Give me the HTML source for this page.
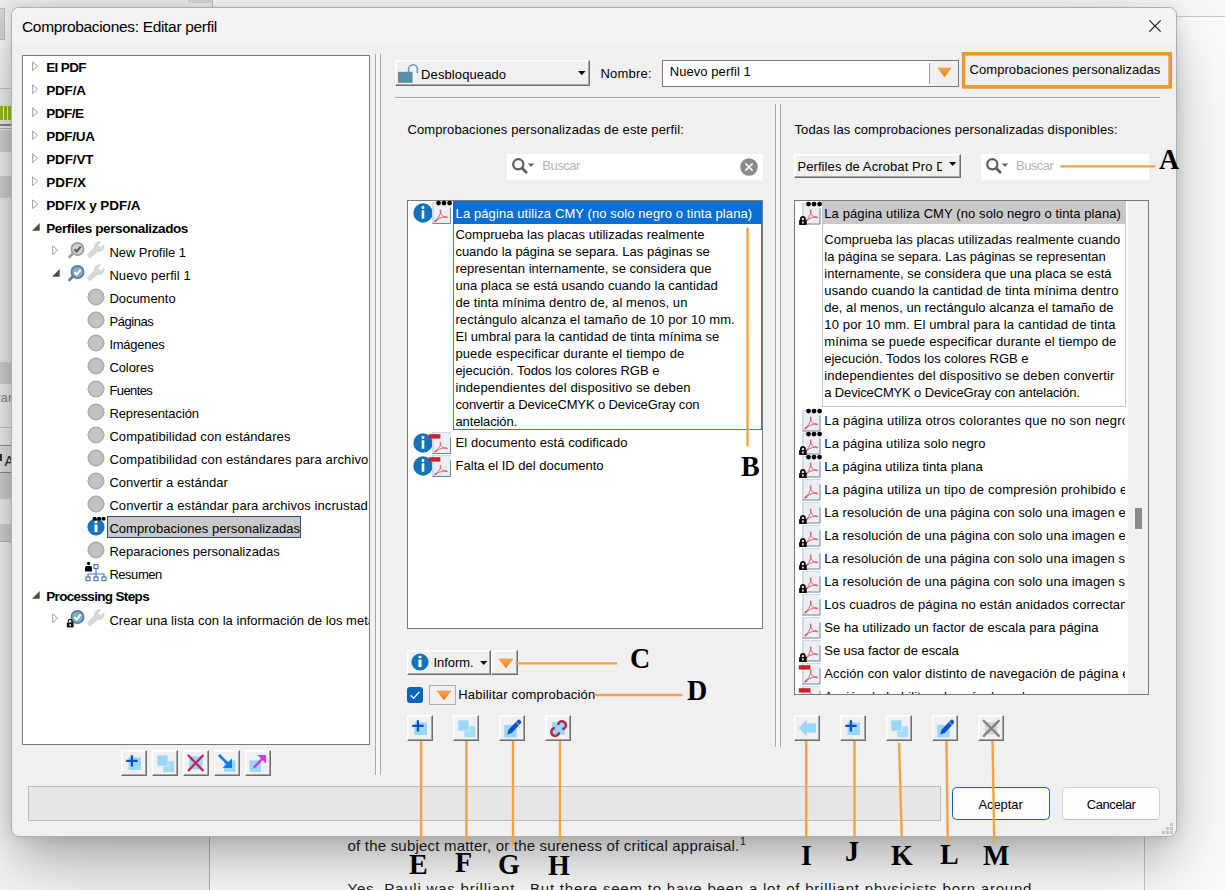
<!DOCTYPE html>
<html lang="es">
<head>
<meta charset="utf-8">
<title>Comprobaciones: Editar perfil</title>
<style>
*{box-sizing:border-box;margin:0;padding:0}
html,body{width:1225px;height:890px;overflow:hidden;background:#fff}
body{position:relative;font-family:"Liberation Sans",sans-serif;font-size:13px;letter-spacing:.12px;color:#000}
.a{position:absolute}
.t{position:absolute;white-space:nowrap;line-height:16px;height:16px}
.b{font-weight:700;letter-spacing:-.14px}
svg{position:absolute;overflow:visible}
#dlg{position:absolute;left:11px;top:7px;width:1166px;height:830px;background:#f0f0f0;border-radius:8px;border:1px solid #aeaeae;box-shadow:0 24px 40px -8px rgba(0,0,0,.21),0 40px 90px rgba(0,0,0,.15),0 0 16px rgba(0,0,0,.12)}
#ttl{position:absolute;left:0;top:0;width:1164px;height:36px;background:#f3f3f3;border-radius:7px 7px 0 0}
.box{position:absolute;background:#fff;border:1px solid #7a7a7a;overflow:hidden}
.btn3{position:absolute;background:#f0f0f0;border-top:1px solid #fff;border-left:1px solid #fff;border-right:1px solid #6e6e6e;border-bottom:1px solid #6e6e6e;box-shadow:inset -1px -1px 0 #a6a6a6,inset 1px 1px 0 #f8f8f8}
.ol{position:absolute;background:#f2a246}
.L{position:absolute;font-family:"Liberation Serif",serif;font-weight:700;font-size:30px;line-height:30px;height:30px;transform:scaleX(.935);transform-origin:0 0;letter-spacing:0;color:#000;white-space:nowrap}
.doc{position:absolute;white-space:nowrap;font-size:15px;line-height:20px;color:#1c1c1c}
.desc{position:absolute;line-height:17px;white-space:nowrap}
.g{color:#b4b4b4}
</style>
</head>
<body>
<div id="bg" class="a" style="left:0;top:0;width:1225px;height:890px;overflow:hidden;background:#fff">
<div class="a" style="left:0px;top:0px;width:213px;height:16px;background:#ececec;"></div>
<div class="a" style="left:213px;top:0px;width:1012px;height:16px;background:#f7f7f7;"></div>
<div class="a" style="left:188px;top:0px;width:24px;height:3px;background:#d6d6d6;"></div>
<div class="a" style="left:212px;top:0px;width:1px;height:10px;background:#c4c4c4;"></div>
<div class="a" style="left:1176px;top:16px;width:49px;height:874px;background:#fbfbfb;"></div>
<div class="a" style="left:1176px;top:16px;width:49px;height:1px;background:#c9c9c9;"></div>
<div class="a" style="left:0px;top:16px;width:30px;height:820px;background:#f4f4f4;"></div>
<div class="a" style="left:0px;top:8px;width:5px;height:32px;background:#d2d2d2;border:1px solid #bdbdbd;border-left:0"></div>
<div class="a" style="left:0px;top:88px;width:30px;height:38px;background:#f1f1f1;border-top:1px solid #c8c8c8"></div>
<div class="a" style="left:0px;top:106px;width:3px;height:14px;background:#9bc21e;"></div>
<div class="a" style="left:4px;top:106px;width:3px;height:14px;background:#9bc21e;"></div>
<div class="a" style="left:8px;top:106px;width:3px;height:14px;background:#9bc21e;"></div>
<div class="a" style="left:0px;top:124px;width:30px;height:2px;background:#8a8a8a;"></div>
<div class="a" style="left:0px;top:128px;width:30px;height:1px;background:#b0b0b0;"></div>
<div class="a" style="left:0px;top:130px;width:30px;height:22px;background:#d4d4d4;"></div>
<div class="a" style="left:0px;top:152px;width:30px;height:24px;background:#f4f4f4;"></div>
<div class="a" style="left:0px;top:176px;width:30px;height:22px;background:#d4d4d4;"></div>
<div class="a" style="left:0px;top:198px;width:30px;height:164px;background:#f0f0f0;"></div>
<div class="a" style="left:0px;top:362px;width:30px;height:22px;background:#d4d4d4;"></div>
<div class="a" style="left:0px;top:384px;width:30px;height:34px;background:#f4f4f4;"></div>
<div class="t" style="left:-6px;top:390px;color:#8a8a8a;font-size:13px">var</div>
<div class="a" style="left:0px;top:427px;width:30px;height:1px;background:#cdcdcd;"></div>
<div class="a" style="left:0px;top:445px;width:14px;height:28px;background:#e6e6e6;border:1px solid #8e8e8e;border-left:0"></div>
<div class="t" style="left:4.5px;top:453px;color:#222;font-size:14px">A</div>
<div class="a" style="left:0px;top:454px;width:2px;height:7px;background:#333;"></div>
<div class="a" style="left:0px;top:473px;width:30px;height:26px;background:#d2d2d2;"></div>
<div class="a" style="left:0px;top:499px;width:30px;height:25px;background:#f2f2f2;"></div>
<div class="a" style="left:0px;top:524px;width:30px;height:17px;background:#d6d6d6;"></div>
<div class="a" style="left:0px;top:541px;width:30px;height:1px;background:#b4b4b4;"></div>
<div class="a" style="left:0px;top:542px;width:30px;height:348px;background:#f6f6f6;"></div>
<div class="a" style="left:0px;top:836px;width:209px;height:54px;background:#f6f6f6;"></div>
<div class="a" style="left:209px;top:836px;width:1px;height:54px;background:#b4b4b4;"></div>
<div class="a" style="left:210px;top:836px;width:934px;height:54px;background:#fff;"></div>
<div class="a" style="left:1144px;top:836px;width:1px;height:54px;background:#c4c4c4;"></div>
<div class="a" style="left:1145px;top:836px;width:80px;height:54px;background:#fbfbfb;"></div>
<div class="doc" style="left:347.5px;top:835.5px;letter-spacing:0.206px;">of the subject matter, or the sureness of critical appraisal.<span style="font-size:10.5px;position:relative;top:-5.5px;letter-spacing:0;margin-left:.5px">1</span></div>
<div class="doc" style="left:347.5px;top:879.1px;letter-spacing:0.789px;">Yes, Pauli was brilliant.&nbsp; But there seem to have been a lot of brilliant physicists born around</div>
</div>
<div id="dlg"><div id="ttl"></div></div>
<div class="t" style="left:22px;top:17px;font-size:15.5px;line-height:20px;height:20px;letter-spacing:-.32px">Comprobaciones: Editar perfil</div>
<svg style="left:1149px;top:20px" width="12" height="12" viewBox="0 0 12 12"><path d="M0.3,0.3 L11.7,11.7 M11.7,0.3 L0.3,11.7" stroke="#111" stroke-width="1.1" fill="none"/></svg>
<div class="box" style="left:22px;top:55px;width:348px;height:690px"></div>
<div class="a" style="left:23px;top:56px;width:346px;height:688px;overflow:hidden">
</div>
<div class="a" style="left:23px;top:56px;width:346px;height:688px;overflow:hidden">
<div class="a" style="left:-23px;top:-56px;width:400px;height:800px">
<svg style="left:32px;top:60.99999999999999px" width="7" height="11" viewBox="0 0 7 11"><path d="M0.6,0.9 L5.7,5.2 L0.6,9.6 Z" fill="#fff" stroke="#a0a0a0" stroke-width="1"/></svg>
<div class="t b" style="left:46.2px;top:60.1px;letter-spacing:-0.634px;font-size:13.5px;">El PDF</div>
<svg style="left:32px;top:84.0px" width="7" height="11" viewBox="0 0 7 11"><path d="M0.6,0.9 L5.7,5.2 L0.6,9.6 Z" fill="#fff" stroke="#a0a0a0" stroke-width="1"/></svg>
<div class="t b" style="left:46.2px;top:83.1px;letter-spacing:-0.160px;font-size:13.5px;">PDF/A</div>
<svg style="left:32px;top:107.0px" width="7" height="11" viewBox="0 0 7 11"><path d="M0.6,0.9 L5.7,5.2 L0.6,9.6 Z" fill="#fff" stroke="#a0a0a0" stroke-width="1"/></svg>
<div class="t b" style="left:46.2px;top:106.1px;letter-spacing:-0.471px;font-size:13.5px;">PDF/E</div>
<svg style="left:32px;top:130.0px" width="7" height="11" viewBox="0 0 7 11"><path d="M0.6,0.9 L5.7,5.2 L0.6,9.6 Z" fill="#fff" stroke="#a0a0a0" stroke-width="1"/></svg>
<div class="t b" style="left:46.2px;top:129.1px;letter-spacing:-0.291px;font-size:13.5px;">PDF/UA</div>
<svg style="left:32px;top:153.0px" width="7" height="11" viewBox="0 0 7 11"><path d="M0.6,0.9 L5.7,5.2 L0.6,9.6 Z" fill="#fff" stroke="#a0a0a0" stroke-width="1"/></svg>
<div class="t b" style="left:46.2px;top:152.1px;letter-spacing:-0.133px;font-size:13.5px;">PDF/VT</div>
<svg style="left:32px;top:176.0px" width="7" height="11" viewBox="0 0 7 11"><path d="M0.6,0.9 L5.7,5.2 L0.6,9.6 Z" fill="#fff" stroke="#a0a0a0" stroke-width="1"/></svg>
<div class="t b" style="left:46.2px;top:175.1px;letter-spacing:-0.011px;font-size:13.5px;">PDF/X</div>
<svg style="left:32px;top:199.0px" width="7" height="11" viewBox="0 0 7 11"><path d="M0.6,0.9 L5.7,5.2 L0.6,9.6 Z" fill="#fff" stroke="#a0a0a0" stroke-width="1"/></svg>
<div class="t b" style="left:46.2px;top:198.1px;letter-spacing:-0.074px;font-size:13.5px;">PDF/X y PDF/A</div>
<svg style="left:32.2px;top:223.1px" width="8" height="8" viewBox="0 0 8 8"><path d="M7.7,0 L7.7,7.7 L0,7.7 Z" fill="#4a4a4a"/></svg>
<div class="t b" style="left:46.2px;top:221.1px;letter-spacing:-0.392px;font-size:13.5px;">Perfiles personalizados</div>
<svg style="left:52px;top:245.00000000000003px" width="7" height="11" viewBox="0 0 7 11"><path d="M0.6,0.9 L5.7,5.2 L0.6,9.6 Z" fill="#fff" stroke="#a0a0a0" stroke-width="1"/></svg>
<svg style="left:68.4px;top:242.00000000000003px" width="18" height="18" viewBox="0 0 18 18"><path d="M5.2,11.2 L1.4,15" stroke="#9b9b9b" stroke-width="2.6" stroke-linecap="round"/><circle cx="9.5" cy="7" r="6.1" fill="#cfcfcf" stroke="#9b9b9b" stroke-width="1.7"/><path d="M6.4,7.2 L8.7,9.4 L12.7,4.6" stroke="#5a5a5a" stroke-width="2.1" fill="none"/></svg>
<svg style="left:87px;top:241.00000000000003px" width="19" height="18" viewBox="0 0 19 18"><path d="M0,13.4 L8,5.8 L12,10 L2.4,17.4 Z" fill="#d7d7d7"/><circle cx="12.2" cy="5.6" r="5.3" fill="#d7d7d7"/><path d="M12.6,5.2 L19,-1.2" stroke="#fff" stroke-width="3.6"/></svg>
<div class="t " style="left:109.4px;top:244.6px;letter-spacing:-0.054px;">New Profile 1</div>
<svg style="left:52.2px;top:269.1px" width="8" height="8" viewBox="0 0 8 8"><path d="M7.7,0 L7.7,7.7 L0,7.7 Z" fill="#4a4a4a"/></svg>
<svg style="left:68.4px;top:265.0px" width="18" height="18" viewBox="0 0 18 18"><path d="M5.2,11.2 L1.4,15" stroke="#4f8098" stroke-width="2.6" stroke-linecap="round"/><circle cx="9.5" cy="7" r="6.1" fill="#86adc2" stroke="#4f8098" stroke-width="1.7"/><path d="M6.4,7.2 L8.7,9.4 L12.7,4.6" stroke="#fff" stroke-width="2.1" fill="none"/></svg>
<svg style="left:87px;top:264.0px" width="19" height="18" viewBox="0 0 19 18"><path d="M0,13.4 L8,5.8 L12,10 L2.4,17.4 Z" fill="#d7d7d7"/><circle cx="12.2" cy="5.6" r="5.3" fill="#d7d7d7"/><path d="M12.6,5.2 L19,-1.2" stroke="#fff" stroke-width="3.6"/></svg>
<div class="t " style="left:109.4px;top:267.6px;letter-spacing:0.085px;">Nuevo perfil 1</div>
<svg style="left:87.4px;top:287.5px" width="18" height="18" viewBox="0 0 18 18"><circle cx="9" cy="9" r="8.3" fill="#b8b8b8"/><circle cx="9" cy="9" r="6.4" fill="#c3c3c3"/><circle cx="9" cy="9" r="8" fill="none" stroke="#adadad" stroke-width="1"/></svg>
<div class="t " style="left:109.4px;top:290.6px;letter-spacing:-0.031px;">Documento</div>
<svg style="left:87.4px;top:310.5px" width="18" height="18" viewBox="0 0 18 18"><circle cx="9" cy="9" r="8.3" fill="#b8b8b8"/><circle cx="9" cy="9" r="6.4" fill="#c3c3c3"/><circle cx="9" cy="9" r="8" fill="none" stroke="#adadad" stroke-width="1"/></svg>
<div class="t " style="left:109.4px;top:313.6px;letter-spacing:-0.425px;">Páginas</div>
<svg style="left:87.4px;top:333.5px" width="18" height="18" viewBox="0 0 18 18"><circle cx="9" cy="9" r="8.3" fill="#b8b8b8"/><circle cx="9" cy="9" r="6.4" fill="#c3c3c3"/><circle cx="9" cy="9" r="8" fill="none" stroke="#adadad" stroke-width="1"/></svg>
<div class="t " style="left:109.4px;top:336.6px;letter-spacing:-0.249px;">Imágenes</div>
<svg style="left:87.4px;top:356.5px" width="18" height="18" viewBox="0 0 18 18"><circle cx="9" cy="9" r="8.3" fill="#b8b8b8"/><circle cx="9" cy="9" r="6.4" fill="#c3c3c3"/><circle cx="9" cy="9" r="8" fill="none" stroke="#adadad" stroke-width="1"/></svg>
<div class="t " style="left:109.4px;top:359.6px;letter-spacing:-0.071px;">Colores</div>
<svg style="left:87.4px;top:379.5px" width="18" height="18" viewBox="0 0 18 18"><circle cx="9" cy="9" r="8.3" fill="#b8b8b8"/><circle cx="9" cy="9" r="6.4" fill="#c3c3c3"/><circle cx="9" cy="9" r="8" fill="none" stroke="#adadad" stroke-width="1"/></svg>
<div class="t " style="left:109.4px;top:382.6px;letter-spacing:-0.582px;">Fuentes</div>
<svg style="left:87.4px;top:402.5px" width="18" height="18" viewBox="0 0 18 18"><circle cx="9" cy="9" r="8.3" fill="#b8b8b8"/><circle cx="9" cy="9" r="6.4" fill="#c3c3c3"/><circle cx="9" cy="9" r="8" fill="none" stroke="#adadad" stroke-width="1"/></svg>
<div class="t " style="left:109.4px;top:405.6px;letter-spacing:-0.111px;">Representación</div>
<svg style="left:87.4px;top:425.5px" width="18" height="18" viewBox="0 0 18 18"><circle cx="9" cy="9" r="8.3" fill="#b8b8b8"/><circle cx="9" cy="9" r="6.4" fill="#c3c3c3"/><circle cx="9" cy="9" r="8" fill="none" stroke="#adadad" stroke-width="1"/></svg>
<div class="t " style="left:109.4px;top:428.6px;letter-spacing:0.090px;">Compatibilidad con estándares</div>
<svg style="left:87.4px;top:448.5px" width="18" height="18" viewBox="0 0 18 18"><circle cx="9" cy="9" r="8.3" fill="#b8b8b8"/><circle cx="9" cy="9" r="6.4" fill="#c3c3c3"/><circle cx="9" cy="9" r="8" fill="none" stroke="#adadad" stroke-width="1"/></svg>
<div class="t " style="left:109.4px;top:451.6px;letter-spacing:0.128px;width:258.3px;overflow:hidden;">Compatibilidad con estándares para archivos</div>
<svg style="left:87.4px;top:471.5px" width="18" height="18" viewBox="0 0 18 18"><circle cx="9" cy="9" r="8.3" fill="#b8b8b8"/><circle cx="9" cy="9" r="6.4" fill="#c3c3c3"/><circle cx="9" cy="9" r="8" fill="none" stroke="#adadad" stroke-width="1"/></svg>
<div class="t " style="left:109.4px;top:474.6px;letter-spacing:0.031px;">Convertir a estándar</div>
<svg style="left:87.4px;top:494.5px" width="18" height="18" viewBox="0 0 18 18"><circle cx="9" cy="9" r="8.3" fill="#b8b8b8"/><circle cx="9" cy="9" r="6.4" fill="#c3c3c3"/><circle cx="9" cy="9" r="8" fill="none" stroke="#adadad" stroke-width="1"/></svg>
<div class="t " style="left:109.4px;top:497.6px;letter-spacing:0.062px;width:258.3px;overflow:hidden;">Convertir a estándar para archivos incrustados</div>
<div class="a" style="left:107px;top:516px;width:194px;height:22px;background:#c9c9c9;border:1px solid #26527c"></div>
<svg style="left:96.4px;top:526.5px" width="1" height="1" viewBox="0 0 1 1"><circle cx="0" cy="0" r="8.6" fill="#1473b9"/><rect x="-1.52" y="-2.43" width="3.04" height="7.49" fill="#fff"/><rect x="-1.52" y="-6.27" width="3.04" height="2.63" rx="1" fill="#fff"/><rect x="-3.2" y="-10.10" width="3.8" height="3.5" rx="1.2" fill="#000"/><rect x="1.2" y="-10.10" width="3.8" height="3.5" rx="1.2" fill="#000"/><rect x="5.6" y="-10.10" width="3.8" height="3.5" rx="1.2" fill="#000"/></svg>
<div class="t " style="left:109.4px;top:520.6px;letter-spacing:0.044px;">Comprobaciones personalizadas</div>
<svg style="left:87.4px;top:540.5px" width="18" height="18" viewBox="0 0 18 18"><circle cx="9" cy="9" r="8.3" fill="#b8b8b8"/><circle cx="9" cy="9" r="6.4" fill="#c3c3c3"/><circle cx="9" cy="9" r="8" fill="none" stroke="#adadad" stroke-width="1"/></svg>
<div class="t " style="left:109.4px;top:543.6px;letter-spacing:-0.036px;">Reparaciones personalizadas</div>
<svg style="left:85px;top:562px" width="22" height="19" viewBox="0 0 22 19"><circle cx="3.6" cy="1.4" r="1.6" fill="#000"/><path d="M0,9.5 V6.2 C0,4.6 1,4 2,4 H5.2 C6.3,4 7,4.8 7,6.2 V9.5 Z" fill="#000"/><g fill="#fff" stroke="#4a78c4" stroke-width="1.2"><path d="M11,6.5 V12 M3,15 V12 H19 V15 M11,12 V15" fill="none"/><rect x="9" y="2.6" width="4" height="4"/><rect x="1" y="15" width="4" height="3.6"/><rect x="9" y="15" width="4" height="3.6"/><rect x="17" y="15" width="4" height="3.6"/></g></svg>
<div class="t " style="left:109.4px;top:566.6px;letter-spacing:-0.462px;">Resumen</div>
<svg style="left:32.2px;top:591.1px" width="8" height="8" viewBox="0 0 8 8"><path d="M7.7,0 L7.7,7.7 L0,7.7 Z" fill="#4a4a4a"/></svg>
<div class="t b" style="left:46.2px;top:589.1px;letter-spacing:-0.656px;font-size:13.5px;">Processing Steps</div>
<svg style="left:52px;top:613.0px" width="7" height="11" viewBox="0 0 7 11"><path d="M0.6,0.9 L5.7,5.2 L0.6,9.6 Z" fill="#fff" stroke="#a0a0a0" stroke-width="1"/></svg>
<svg style="left:68.4px;top:610.0px" width="18" height="18" viewBox="0 0 18 18"><path d="M5.2,11.2 L1.4,15" stroke="#4f8098" stroke-width="2.6" stroke-linecap="round"/><circle cx="9.5" cy="7" r="6.1" fill="#86adc2" stroke="#4f8098" stroke-width="1.7"/><path d="M6.4,7.2 L8.7,9.4 L12.7,4.6" stroke="#fff" stroke-width="2.1" fill="none"/><rect x="-1.2" y="12.6" width="6.8" height="4.8" fill="#111"/><path d="M0.3,12.6 v-1.4 a1.9,1.9 0 0 1 3.8,0 v1.4" stroke="#111" stroke-width="1.2" fill="none"/><rect x="1.5" y="14" width="1.4" height="2" fill="#fff"/></svg>
<svg style="left:87px;top:609.0px" width="19" height="18" viewBox="0 0 19 18"><path d="M0,13.4 L8,5.8 L12,10 L2.4,17.4 Z" fill="#d7d7d7"/><circle cx="12.2" cy="5.6" r="5.3" fill="#d7d7d7"/><path d="M12.6,5.2 L19,-1.2" stroke="#fff" stroke-width="3.6"/></svg>
<div class="t " style="left:109.4px;top:612.6px;letter-spacing:0.027px;">Crear una lista con la información de los metadatos</div>
</div>
</div>
<div class="btn3" style="left:121px;top:750px;width:26px;height:26px"></div>
<svg style="left:121px;top:750px" width="26" height="26" viewBox="0 0 26 26"><rect x="7.5" y="7.5" width="12.5" height="12.5" fill="#9ad6f6"/><path d="M5.2,10.8 H16.6 M10.9,5.2 V16.6" stroke="#0b4fc9" stroke-width="2.3"/></svg>
<div class="btn3" style="left:152px;top:750px;width:26px;height:26px"></div>
<svg style="left:152px;top:750px" width="26" height="26" viewBox="0 0 26 26"><rect x="11.2" y="11.2" width="11" height="11" fill="#a6dbf7"/><rect x="5" y="5" width="11" height="11" fill="#9ad6f6" stroke="#dff1fb" stroke-width=".8"/></svg>
<div class="btn3" style="left:183px;top:750px;width:26px;height:26px"></div>
<svg style="left:183px;top:750px" width="26" height="26" viewBox="0 0 26 26"><rect x="6.4" y="6.4" width="13" height="13" fill="#9ad6f6"/><path d="M5,5 L20.4,21 M20.4,5 L5,21" stroke="#c0205a" stroke-width="2.2"/></svg>
<div class="btn3" style="left:214px;top:750px;width:26px;height:26px"></div>
<svg style="left:214px;top:750px" width="26" height="26" viewBox="0 0 26 26"><rect x="10" y="10.4" width="11.4" height="11.4" fill="#9ad6f6"/><path d="M5,5 L15.4,15.4" stroke="#0f7ce4" stroke-width="2.6"/><path d="M18,8.6 V18 H8.6 Z" fill="#0f7ce4"/></svg>
<div class="btn3" style="left:245px;top:750px;width:26px;height:26px"></div>
<svg style="left:245px;top:750px" width="26" height="26" viewBox="0 0 26 26"><rect x="4.6" y="10.4" width="11.4" height="11.4" fill="#9ad6f6"/><path d="M8.6,17.6 L19,7.2" stroke="#c63cee" stroke-width="2.4"/><path d="M12.4,5 H21 V13.6 Z" fill="#c63cee"/></svg>
<div class="a" style="left:375px;top:54px;width:1px;height:721px;background:#a8a8a8;"></div>
<div class="a" style="left:376px;top:54px;width:4px;height:721px;background:#f6f6f6;"></div>
<div class="a" style="left:380px;top:54px;width:1px;height:721px;background:#a8a8a8;"></div>
<div class="a" style="left:775px;top:104px;width:1px;height:643px;background:#a8a8a8;"></div>
<div class="a" style="left:776px;top:104px;width:4px;height:643px;background:#f6f6f6;"></div>
<div class="a" style="left:780px;top:104px;width:1px;height:643px;background:#a8a8a8;"></div>
<div class="btn3" style="left:395px;top:60px;width:195px;height:26px"></div>
<svg style="left:397px;top:64px" width="21" height="19" viewBox="0 0 21 19"><path d="M11.6,8 V5.2 a4.4,4.4 0 0 1 8.8,0 V9" fill="none" stroke="#6d9db5" stroke-width="1.6"/><rect x="1" y="7.8" width="14.6" height="11" fill="#5a8fa9"/></svg>
<div class="t " style="left:421.1px;top:66.6px;letter-spacing:0.105px;">Desbloqueado</div>
<svg style="left:577.9px;top:70.8px" width="7.6" height="4.2" viewBox="0 0 7.6 4.2"><path d="M0,0 H7.6 L3.8,4.2 Z" fill="#111"/></svg>
<div class="t " style="left:600.4px;top:65.9px;letter-spacing:0.236px;">Nombre:</div>
<div class="a" style="left:662px;top:60px;width:297px;height:27px;background:#fff;border:1px solid #7a7a7a"></div>
<div class="a" style="left:930px;top:61px;width:28px;height:25px;background:#f0f0f0;"></div>
<div class="a" style="left:929px;top:63px;width:1px;height:21px;background:#9a9a9a;"></div>
<svg style="left:937.5px;top:68.0px" width="13" height="9" viewBox="0 0 13 9"><linearGradient id="g129" x1="0" y1="0" x2="0" y2="1"><stop offset="0" stop-color="#f9a94e"/><stop offset="1" stop-color="#ee7a18"/></linearGradient><path d="M0,0 H13 L6.5,9 Z" fill="url(#g129)" stroke="#f08a2a" stroke-width=".6"/></svg>
<div class="t " style="left:669.7px;top:63.9px;letter-spacing:0.071px;">Nuevo perfil 1</div>
<svg style="left:0;top:0" width="1225" height="100" viewBox="0 0 1225 100"><rect x="963.6" y="53.8" width="206.6" height="33.1" fill="#f0f0f0" stroke="#f0962a" stroke-width="3.6"/></svg>
<div class="t " style="left:969.6px;top:62.1px;letter-spacing:0.051px;">Comprobaciones personalizadas</div>
<div class="a" style="left:395px;top:97px;width:765px;height:1px;background:#a6a6a6;"></div>
<div class="a" style="left:395px;top:98px;width:765px;height:1px;background:#fbfbfb;"></div>
<div class="t " style="left:407.4px;top:122.2px;letter-spacing:0.125px;">Comprobaciones personalizadas de este perfil:</div>
<div class="a" style="left:507px;top:154px;width:256px;height:26px;background:#fff;"></div>
<svg style="left:512.3px;top:157.6px" width="23" height="16" viewBox="0 0 23 16"><circle cx="6.3" cy="6.3" r="5.1" fill="none" stroke="#5c5c5c" stroke-width="2.2"/><path d="M10,10 L14.2,14.2" stroke="#5c5c5c" stroke-width="2.7" stroke-linecap="round"/><path d="M15.8,5.6 H22.2 L19,8.8 Z" fill="#5c5c5c"/></svg>
<div class="t g" style="left:542.2px;top:158.3px;letter-spacing:-0.460px;">Buscar</div>
<svg style="left:739.5px;top:157.7px" width="18" height="18" viewBox="0 0 18 18"><circle cx="9" cy="9" r="8.8" fill="#8a8a8a"/><path d="M5.4,5.4 L12.6,12.6 M12.6,5.4 L5.4,12.6" stroke="#fff" stroke-width="1.6"/></svg>
<div class="box" style="left:407px;top:200px;width:356px;height:429px"></div>
<div class="a" style="left:453px;top:201px;width:309px;height:23px;background:#0a6fd1;"></div>
<svg style="left:422.5px;top:213px" width="1" height="1" viewBox="0 0 1 1"><circle cx="0" cy="0" r="9.7" fill="#1473b9"/><rect x="-1.30" y="-2.74" width="2.60" height="8.44" fill="#fff"/><rect x="-1.30" y="-7.08" width="2.60" height="2.97" rx="1" fill="#fff"/></svg>
<svg style="left:431.5px;top:201.5px" width="19" height="22" viewBox="0 0 19 22"><rect x="0" y="0" width="19" height="22" fill="#e9eff5"/><rect x="0" y="0" width="1.8" height="22" fill="#c9d8e6"/><path d="M0.5,22 V0.5 H19" fill="none" stroke="#cfd9e3" stroke-width="1"/><path d="M18.5,5.5 V21.5 H0.5" fill="none" stroke="#70849a" stroke-width="1"/><g transform="translate(-0.2,1.2) scale(1,0.98)"><path d="M3.2,18.6 C5.6,16.6 8.4,12.4 9,8.2 C9.3,6.2 8.1,6.2 8.3,8.2 C8.7,11.8 11.4,14.2 15.2,14.8 C16.4,14.5 15.4,13.5 13.2,13.8 C9.4,14.4 5.6,16.2 3.2,18.6 Z" fill="none" stroke="#e4444a" stroke-width="0.85" stroke-linejoin="round"/><path d="M2.8,19.2 L5,16.6" stroke="#e4444a" stroke-width="1.4"/></g><circle cx="6.5" cy="1.1" r="2.4" fill="#000"/><circle cx="12" cy="1.1" r="2.4" fill="#000"/><circle cx="17.6" cy="1.1" r="2.4" fill="#000"/></svg>
<div class="t " style="left:455.6px;top:205.7px;color:#fff;letter-spacing:0.096px;">La página utiliza CMY (no solo negro o tinta plana)</div>
<div class="a" style="left:453px;top:224px;width:309px;height:206px;border:1px solid #2f7fc4;border-top:0;background:#fff"></div>
<div class="desc" style="left:455.4px;top:225.6px"><span style="display:block;letter-spacing:0.015px;">Comprueba las placas utilizadas realmente</span><span style="display:block;letter-spacing:-0.000px;">cuando la página se separa. Las páginas se</span><span style="display:block;letter-spacing:0.024px;">representan internamente, se considera que</span><span style="display:block;letter-spacing:0.032px;">una placa se está usando cuando la cantidad</span><span style="display:block;letter-spacing:0.077px;">de tinta mínima dentro de, al menos, un</span><span style="display:block;letter-spacing:0.090px;">rectángulo alcanza el tamaño de 10 por 10 mm.</span><span style="display:block;letter-spacing:0.070px;">El umbral para la cantidad de tinta mínima se</span><span style="display:block;letter-spacing:0.131px;">puede especificar durante el tiempo de</span><span style="display:block;letter-spacing:-0.029px;">ejecución. Todos los colores RGB e</span><span style="display:block;letter-spacing:0.119px;">independientes del dispositivo se deben</span><span style="display:block;letter-spacing:-0.114px;">convertir a DeviceCMYK o DeviceGray con</span><span style="display:block;letter-spacing:-0.107px;">antelación.</span></div>
<svg style="left:422.5px;top:442.9px" width="1" height="1" viewBox="0 0 1 1"><circle cx="0" cy="0" r="9.7" fill="#1473b9"/><rect x="-1.30" y="-2.74" width="2.60" height="8.44" fill="#fff"/><rect x="-1.30" y="-7.08" width="2.60" height="2.97" rx="1" fill="#fff"/></svg>
<svg style="left:431.5px;top:431.5px" width="19" height="22" viewBox="0 0 19 22"><rect x="0" y="0" width="19" height="22" fill="#e9eff5"/><rect x="0" y="0" width="1.8" height="22" fill="#c9d8e6"/><path d="M0.5,22 V0.5 H19" fill="none" stroke="#cfd9e3" stroke-width="1"/><path d="M18.5,5.5 V21.5 H0.5" fill="none" stroke="#70849a" stroke-width="1"/><g transform="translate(-0.2,4.8) scale(1,0.8)"><path d="M3.2,18.6 C5.6,16.6 8.4,12.4 9,8.2 C9.3,6.2 8.1,6.2 8.3,8.2 C8.7,11.8 11.4,14.2 15.2,14.8 C16.4,14.5 15.4,13.5 13.2,13.8 C9.4,14.4 5.6,16.2 3.2,18.6 Z" fill="none" stroke="#e4444a" stroke-width="0.85" stroke-linejoin="round"/><path d="M2.8,19.2 L5,16.6" stroke="#e4444a" stroke-width="1.4"/></g><rect x="-3.2" y="2.2" width="11.6" height="4.4" fill="#c8222c"/></svg>
<div class="t " style="left:455.6px;top:435.3px;letter-spacing:0.074px;">El documento está codificado</div>
<svg style="left:422.5px;top:465.9px" width="1" height="1" viewBox="0 0 1 1"><circle cx="0" cy="0" r="9.7" fill="#1473b9"/><rect x="-1.30" y="-2.74" width="2.60" height="8.44" fill="#fff"/><rect x="-1.30" y="-7.08" width="2.60" height="2.97" rx="1" fill="#fff"/></svg>
<svg style="left:431.5px;top:454.5px" width="19" height="22" viewBox="0 0 19 22"><rect x="0" y="0" width="19" height="22" fill="#e9eff5"/><rect x="0" y="0" width="1.8" height="22" fill="#c9d8e6"/><path d="M0.5,22 V0.5 H19" fill="none" stroke="#cfd9e3" stroke-width="1"/><path d="M18.5,5.5 V21.5 H0.5" fill="none" stroke="#70849a" stroke-width="1"/><g transform="translate(-0.2,4.8) scale(1,0.8)"><path d="M3.2,18.6 C5.6,16.6 8.4,12.4 9,8.2 C9.3,6.2 8.1,6.2 8.3,8.2 C8.7,11.8 11.4,14.2 15.2,14.8 C16.4,14.5 15.4,13.5 13.2,13.8 C9.4,14.4 5.6,16.2 3.2,18.6 Z" fill="none" stroke="#e4444a" stroke-width="0.85" stroke-linejoin="round"/><path d="M2.8,19.2 L5,16.6" stroke="#e4444a" stroke-width="1.4"/></g><rect x="-3.2" y="2.2" width="11.6" height="4.4" fill="#c8222c"/></svg>
<div class="t " style="left:455.6px;top:458.1px;letter-spacing:-0.009px;">Falta el ID del documento</div>
<div class="btn3" style="left:407px;top:650px;width:84px;height:25px"></div>
<svg style="left:420.4px;top:662.4px" width="1" height="1" viewBox="0 0 1 1"><circle cx="0" cy="0" r="8.6" fill="#1473b9"/><rect x="-1.52" y="-2.43" width="3.04" height="7.49" fill="#fff"/><rect x="-1.52" y="-6.27" width="3.04" height="2.63" rx="1" fill="#fff"/></svg>
<div class="t " style="left:433.5px;top:655.3px;letter-spacing:-0.065px;">Inform.</div>
<svg style="left:480px;top:660.5px" width="7.4" height="4" viewBox="0 0 7.4 4"><path d="M0,0 H7.4 L3.7,4 Z" fill="#111"/></svg>
<div class="btn3" style="left:491px;top:650px;width:27px;height:25px"></div>
<svg style="left:498.7px;top:658.7px" width="14" height="9" viewBox="0 0 14 9"><linearGradient id="g158" x1="0" y1="0" x2="0" y2="1"><stop offset="0" stop-color="#f9a94e"/><stop offset="1" stop-color="#ee7a18"/></linearGradient><path d="M0,0 H14 L7.0,9 Z" fill="url(#g158)" stroke="#f08a2a" stroke-width=".6"/></svg>
<svg style="left:407px;top:687px" width="16" height="16" viewBox="0 0 16 16"><rect x="0" y="0" width="16" height="16" rx="3" fill="#0a63bd"/><path d="M3.6,8.2 L6.6,11.2 L12.4,4.9" fill="none" stroke="#fff" stroke-width="1.3"/></svg>
<div class="a" style="left:429px;top:685px;width:27px;height:20px;border:1px solid #adadad;background:#f0f0f0"></div>
<svg style="left:436.7px;top:690.9px" width="14" height="9" viewBox="0 0 14 9"><linearGradient id="g161" x1="0" y1="0" x2="0" y2="1"><stop offset="0" stop-color="#f9a94e"/><stop offset="1" stop-color="#ee7a18"/></linearGradient><path d="M0,0 H14 L7.0,9 Z" fill="url(#g161)" stroke="#f08a2a" stroke-width=".6"/></svg>
<div class="t " style="left:458.3px;top:687.2px;letter-spacing:0.189px;">Habilitar comprobación</div>
<div class="btn3" style="left:407px;top:715px;width:26px;height:26px"></div>
<svg style="left:407px;top:715px" width="26" height="26" viewBox="0 0 26 26"><rect x="7.5" y="7.5" width="12.5" height="12.5" fill="#9ad6f6"/><path d="M5.2,10.8 H16.6 M10.9,5.2 V16.6" stroke="#0b4fc9" stroke-width="2.3"/></svg>
<div class="btn3" style="left:453px;top:715px;width:26px;height:26px"></div>
<svg style="left:453px;top:715px" width="26" height="26" viewBox="0 0 26 26"><rect x="11.2" y="11.2" width="11" height="11" fill="#a6dbf7"/><rect x="5" y="5" width="11" height="11" fill="#9ad6f6" stroke="#dff1fb" stroke-width=".8"/></svg>
<div class="btn3" style="left:499px;top:715px;width:26px;height:26px"></div>
<svg style="left:499px;top:715px" width="26" height="26" viewBox="0 0 26 26"><rect x="5.2" y="10" width="12.5" height="12.5" fill="#9ad6f6"/><path d="M8.2,19.6 L9.6,14.6 L18.4,5.4 a1.9,1.9 0 0 1 2.9,0 l.3,.3 a1.9,1.9 0 0 1 0,2.7 L12.8,18 Z" fill="#1450c8"/><path d="M17,6.8 L20.2,10" stroke="#9ad6f6" stroke-width=".9"/></svg>
<div class="btn3" style="left:545px;top:715px;width:26px;height:26px"></div>
<svg style="left:545px;top:715px" width="26" height="26" viewBox="0 0 26 26"><rect x="7" y="7.2" width="12.8" height="12.5" fill="#9ad6f6"/><g transform="translate(13.6,13.6) rotate(-45)"><rect x="-5" y="-2.1" width="10" height="4.2" fill="#9ad6f6"/><g fill="none" stroke="#b9234c" stroke-width="2.5"><path d="M-2.3,-3 A3.9,3.9 0 1 0 -2.3,3"/><path d="M2.3,-3 A3.9,3.9 0 1 1 2.3,3"/></g></g></svg>
<div class="t " style="left:794.5px;top:122.0px;letter-spacing:0.113px;">Todas las comprobaciones personalizadas disponibles:</div>
<div class="btn3" style="left:794px;top:154px;width:167px;height:24px"></div>
<div class="t" style="left:797.4px;top:158.8px;width:144.4px;overflow:hidden;letter-spacing:0.097px;">Perfiles de Acrobat Pro DC</div>
<svg style="left:949px;top:162.4px" width="7.4" height="4" viewBox="0 0 7.4 4"><path d="M0,0 H7.4 L3.7,4 Z" fill="#111"/></svg>
<div class="a" style="left:981px;top:154px;width:168px;height:26px;background:#fff;"></div>
<svg style="left:986.3px;top:157.6px" width="23" height="16" viewBox="0 0 23 16"><circle cx="6.3" cy="6.3" r="5.1" fill="none" stroke="#5c5c5c" stroke-width="2.2"/><path d="M10,10 L14.2,14.2" stroke="#5c5c5c" stroke-width="2.7" stroke-linecap="round"/><path d="M15.8,5.6 H22.2 L19,8.8 Z" fill="#5c5c5c"/></svg>
<div class="t g" style="left:1016.1px;top:158.3px;letter-spacing:-0.560px;">Buscar</div>
<div class="box" style="left:794px;top:200px;width:355px;height:495px"></div>
<div class="a" style="left:795px;top:201px;width:353px;height:493px;overflow:hidden">
<div class="a" style="left:-795px;top:-201px;width:1225px;height:890px">
<div class="a" style="left:1128px;top:201px;width:20px;height:493px;background:#f0f0f0;"></div>
<div class="a" style="left:1134.5px;top:508px;width:7px;height:21px;background:#8b8b8b;"></div>
<div class="a" style="left:822px;top:201px;width:304px;height:23px;background:#c9c9c9;"></div>
<svg style="left:801.5px;top:202.5px" width="18.5" height="21.5" viewBox="0 0 18.5 21.5"><rect x="0" y="0" width="18.5" height="21.5" fill="#e9eff5"/><rect x="0" y="0" width="1.8" height="21.5" fill="#c9d8e6"/><path d="M0.5,21.5 V0.5 H18.5" fill="none" stroke="#cfd9e3" stroke-width="1"/><path d="M18.0,5.4 V21.0 H0.5" fill="none" stroke="#70849a" stroke-width="1"/><g transform="scale(1.005,1.005)"><path d="M3.2,18.6 C5.6,16.6 8.4,12.4 9,8.2 C9.3,6.2 8.1,6.2 8.3,8.2 C8.7,11.8 11.4,14.2 15.2,14.8 C16.4,14.5 15.4,13.5 13.2,13.8 C9.4,14.4 5.6,16.2 3.2,18.6 Z" fill="none" stroke="#e4444a" stroke-width="0.85" stroke-linejoin="round"/><path d="M2.8,19.2 L5,16.6" stroke="#e4444a" stroke-width="1.4"/></g><circle cx="6.5" cy="1.1" r="2.4" fill="#000"/><circle cx="12" cy="1.1" r="2.4" fill="#000"/><circle cx="17.6" cy="1.1" r="2.4" fill="#000"/><rect x="-2.9" y="17" width="7.6" height="4.9" rx=".5" fill="#0c0c0c"/><path d="M-1.1,17.2 v-1.4 a2,2 0 0 1 4,0 v1.4" stroke="#0c0c0c" stroke-width="1.8" fill="none"/><rect x="0.2" y="18.3" width="1.4" height="2.2" fill="#fff"/></svg>
<div class="t " style="left:824.3px;top:205.9px;letter-spacing:0.098px;">La página utiliza CMY (no solo negro o tinta plana)</div>
<div class="a" style="left:822px;top:224px;width:304px;height:183px;border:1px solid #c6c6c6;border-top:0;background:#fff"></div>
<div class="desc" style="left:824.3px;top:230.8px"><span style="display:block;letter-spacing:0.026px;">Comprueba las placas utilizadas realmente cuando</span><span style="display:block;letter-spacing:0.008px;">la página se separa. Las páginas se representan</span><span style="display:block;letter-spacing:-0.007px;">internamente, se considera que una placa se está</span><span style="display:block;letter-spacing:0.122px;">usando cuando la cantidad de tinta mínima dentro</span><span style="display:block;letter-spacing:0.033px;">de, al menos, un rectángulo alcanza el tamaño de</span><span style="display:block;letter-spacing:0.134px;">10 por 10 mm. El umbral para la cantidad de tinta</span><span style="display:block;letter-spacing:0.094px;">mínima se puede especificar durante el tiempo de</span><span style="display:block;letter-spacing:-0.023px;">ejecución. Todos los colores RGB e</span><span style="display:block;letter-spacing:0.126px;">independientes del dispositivo se deben convertir</span><span style="display:block;letter-spacing:-0.150px;">a DeviceCMYK o DeviceGray con antelación.</span></div>
<div class="a" style="left:795px;top:201px;width:330.3px;height:493px;overflow:hidden"><div class="a" style="left:-795px;top:-201px;width:1225px;height:890px">
<svg style="left:801.5px;top:409.5px" width="18.5" height="21.5" viewBox="0 0 18.5 21.5"><rect x="0" y="0" width="18.5" height="21.5" fill="#e9eff5"/><rect x="0" y="0" width="1.8" height="21.5" fill="#c9d8e6"/><path d="M0.5,21.5 V0.5 H18.5" fill="none" stroke="#cfd9e3" stroke-width="1"/><path d="M18.0,5.4 V21.0 H0.5" fill="none" stroke="#70849a" stroke-width="1"/><g transform="scale(1.005,1.005)"><path d="M3.2,18.6 C5.6,16.6 8.4,12.4 9,8.2 C9.3,6.2 8.1,6.2 8.3,8.2 C8.7,11.8 11.4,14.2 15.2,14.8 C16.4,14.5 15.4,13.5 13.2,13.8 C9.4,14.4 5.6,16.2 3.2,18.6 Z" fill="none" stroke="#e4444a" stroke-width="0.85" stroke-linejoin="round"/><path d="M2.8,19.2 L5,16.6" stroke="#e4444a" stroke-width="1.4"/></g><circle cx="6.5" cy="1.1" r="2.4" fill="#000"/><circle cx="12" cy="1.1" r="2.4" fill="#000"/><circle cx="17.6" cy="1.1" r="2.4" fill="#000"/></svg>
<div class="t " style="left:824.3px;top:412.5px;letter-spacing:0.195px;">La página utiliza otros colorantes que no son negro</div>
<svg style="left:801.5px;top:432.5px" width="18.5" height="21.5" viewBox="0 0 18.5 21.5"><rect x="0" y="0" width="18.5" height="21.5" fill="#e9eff5"/><rect x="0" y="0" width="1.8" height="21.5" fill="#c9d8e6"/><path d="M0.5,21.5 V0.5 H18.5" fill="none" stroke="#cfd9e3" stroke-width="1"/><path d="M18.0,5.4 V21.0 H0.5" fill="none" stroke="#70849a" stroke-width="1"/><g transform="scale(1.005,1.005)"><path d="M3.2,18.6 C5.6,16.6 8.4,12.4 9,8.2 C9.3,6.2 8.1,6.2 8.3,8.2 C8.7,11.8 11.4,14.2 15.2,14.8 C16.4,14.5 15.4,13.5 13.2,13.8 C9.4,14.4 5.6,16.2 3.2,18.6 Z" fill="none" stroke="#e4444a" stroke-width="0.85" stroke-linejoin="round"/><path d="M2.8,19.2 L5,16.6" stroke="#e4444a" stroke-width="1.4"/></g><circle cx="6.5" cy="1.1" r="2.4" fill="#000"/><circle cx="12" cy="1.1" r="2.4" fill="#000"/><circle cx="17.6" cy="1.1" r="2.4" fill="#000"/><rect x="-2.9" y="17" width="7.6" height="4.9" rx=".5" fill="#0c0c0c"/><path d="M-1.1,17.2 v-1.4 a2,2 0 0 1 4,0 v1.4" stroke="#0c0c0c" stroke-width="1.8" fill="none"/><rect x="0.2" y="18.3" width="1.4" height="2.2" fill="#fff"/></svg>
<div class="t " style="left:824.3px;top:435.5px;letter-spacing:0.108px;">La página utiliza solo negro</div>
<svg style="left:801.5px;top:455.5px" width="18.5" height="21.5" viewBox="0 0 18.5 21.5"><rect x="0" y="0" width="18.5" height="21.5" fill="#e9eff5"/><rect x="0" y="0" width="1.8" height="21.5" fill="#c9d8e6"/><path d="M0.5,21.5 V0.5 H18.5" fill="none" stroke="#cfd9e3" stroke-width="1"/><path d="M18.0,5.4 V21.0 H0.5" fill="none" stroke="#70849a" stroke-width="1"/><g transform="scale(1.005,1.005)"><path d="M3.2,18.6 C5.6,16.6 8.4,12.4 9,8.2 C9.3,6.2 8.1,6.2 8.3,8.2 C8.7,11.8 11.4,14.2 15.2,14.8 C16.4,14.5 15.4,13.5 13.2,13.8 C9.4,14.4 5.6,16.2 3.2,18.6 Z" fill="none" stroke="#e4444a" stroke-width="0.85" stroke-linejoin="round"/><path d="M2.8,19.2 L5,16.6" stroke="#e4444a" stroke-width="1.4"/></g><circle cx="6.5" cy="1.1" r="2.4" fill="#000"/><circle cx="12" cy="1.1" r="2.4" fill="#000"/><circle cx="17.6" cy="1.1" r="2.4" fill="#000"/><rect x="-2.9" y="17" width="7.6" height="4.9" rx=".5" fill="#0c0c0c"/><path d="M-1.1,17.2 v-1.4 a2,2 0 0 1 4,0 v1.4" stroke="#0c0c0c" stroke-width="1.8" fill="none"/><rect x="0.2" y="18.3" width="1.4" height="2.2" fill="#fff"/></svg>
<div class="t " style="left:824.3px;top:458.5px;letter-spacing:0.029px;">La página utiliza tinta plana</div>
<svg style="left:801.5px;top:478.5px" width="18.5" height="21.5" viewBox="0 0 18.5 21.5"><rect x="0" y="0" width="18.5" height="21.5" fill="#e9eff5"/><rect x="0" y="0" width="1.8" height="21.5" fill="#c9d8e6"/><path d="M0.5,21.5 V0.5 H18.5" fill="none" stroke="#cfd9e3" stroke-width="1"/><path d="M18.0,5.4 V21.0 H0.5" fill="none" stroke="#70849a" stroke-width="1"/><g transform="scale(1.005,1.005)"><path d="M3.2,18.6 C5.6,16.6 8.4,12.4 9,8.2 C9.3,6.2 8.1,6.2 8.3,8.2 C8.7,11.8 11.4,14.2 15.2,14.8 C16.4,14.5 15.4,13.5 13.2,13.8 C9.4,14.4 5.6,16.2 3.2,18.6 Z" fill="none" stroke="#e4444a" stroke-width="0.85" stroke-linejoin="round"/><path d="M2.8,19.2 L5,16.6" stroke="#e4444a" stroke-width="1.4"/></g></svg>
<div class="t " style="left:824.3px;top:481.5px;letter-spacing:0.188px;">La página utiliza un tipo de compresión prohibido en</div>
<svg style="left:801.5px;top:501.5px" width="18.5" height="21.5" viewBox="0 0 18.5 21.5"><rect x="0" y="0" width="18.5" height="21.5" fill="#e9eff5"/><rect x="0" y="0" width="1.8" height="21.5" fill="#c9d8e6"/><path d="M0.5,21.5 V0.5 H18.5" fill="none" stroke="#cfd9e3" stroke-width="1"/><path d="M18.0,5.4 V21.0 H0.5" fill="none" stroke="#70849a" stroke-width="1"/><g transform="scale(1.005,1.005)"><path d="M3.2,18.6 C5.6,16.6 8.4,12.4 9,8.2 C9.3,6.2 8.1,6.2 8.3,8.2 C8.7,11.8 11.4,14.2 15.2,14.8 C16.4,14.5 15.4,13.5 13.2,13.8 C9.4,14.4 5.6,16.2 3.2,18.6 Z" fill="none" stroke="#e4444a" stroke-width="0.85" stroke-linejoin="round"/><path d="M2.8,19.2 L5,16.6" stroke="#e4444a" stroke-width="1.4"/></g><rect x="-2.9" y="17" width="7.6" height="4.9" rx=".5" fill="#0c0c0c"/><path d="M-1.1,17.2 v-1.4 a2,2 0 0 1 4,0 v1.4" stroke="#0c0c0c" stroke-width="1.8" fill="none"/><rect x="0.2" y="18.3" width="1.4" height="2.2" fill="#fff"/></svg>
<div class="t " style="left:824.3px;top:504.5px;letter-spacing:0.076px;">La resolución de una página con solo una imagen es</div>
<svg style="left:801.5px;top:524.5px" width="18.5" height="21.5" viewBox="0 0 18.5 21.5"><rect x="0" y="0" width="18.5" height="21.5" fill="#e9eff5"/><rect x="0" y="0" width="1.8" height="21.5" fill="#c9d8e6"/><path d="M0.5,21.5 V0.5 H18.5" fill="none" stroke="#cfd9e3" stroke-width="1"/><path d="M18.0,5.4 V21.0 H0.5" fill="none" stroke="#70849a" stroke-width="1"/><g transform="scale(1.005,1.005)"><path d="M3.2,18.6 C5.6,16.6 8.4,12.4 9,8.2 C9.3,6.2 8.1,6.2 8.3,8.2 C8.7,11.8 11.4,14.2 15.2,14.8 C16.4,14.5 15.4,13.5 13.2,13.8 C9.4,14.4 5.6,16.2 3.2,18.6 Z" fill="none" stroke="#e4444a" stroke-width="0.85" stroke-linejoin="round"/><path d="M2.8,19.2 L5,16.6" stroke="#e4444a" stroke-width="1.4"/></g><rect x="-2.9" y="17" width="7.6" height="4.9" rx=".5" fill="#0c0c0c"/><path d="M-1.1,17.2 v-1.4 a2,2 0 0 1 4,0 v1.4" stroke="#0c0c0c" stroke-width="1.8" fill="none"/><rect x="0.2" y="18.3" width="1.4" height="2.2" fill="#fff"/></svg>
<div class="t " style="left:824.3px;top:527.5px;letter-spacing:0.076px;">La resolución de una página con solo una imagen es</div>
<svg style="left:801.5px;top:547.5px" width="18.5" height="21.5" viewBox="0 0 18.5 21.5"><rect x="0" y="0" width="18.5" height="21.5" fill="#e9eff5"/><rect x="0" y="0" width="1.8" height="21.5" fill="#c9d8e6"/><path d="M0.5,21.5 V0.5 H18.5" fill="none" stroke="#cfd9e3" stroke-width="1"/><path d="M18.0,5.4 V21.0 H0.5" fill="none" stroke="#70849a" stroke-width="1"/><g transform="scale(1.005,1.005)"><path d="M3.2,18.6 C5.6,16.6 8.4,12.4 9,8.2 C9.3,6.2 8.1,6.2 8.3,8.2 C8.7,11.8 11.4,14.2 15.2,14.8 C16.4,14.5 15.4,13.5 13.2,13.8 C9.4,14.4 5.6,16.2 3.2,18.6 Z" fill="none" stroke="#e4444a" stroke-width="0.85" stroke-linejoin="round"/><path d="M2.8,19.2 L5,16.6" stroke="#e4444a" stroke-width="1.4"/></g><rect x="-2.9" y="17" width="7.6" height="4.9" rx=".5" fill="#0c0c0c"/><path d="M-1.1,17.2 v-1.4 a2,2 0 0 1 4,0 v1.4" stroke="#0c0c0c" stroke-width="1.8" fill="none"/><rect x="0.2" y="18.3" width="1.4" height="2.2" fill="#fff"/></svg>
<div class="t " style="left:824.3px;top:550.5px;letter-spacing:0.076px;">La resolución de una página con solo una imagen su</div>
<svg style="left:801.5px;top:570.5px" width="18.5" height="21.5" viewBox="0 0 18.5 21.5"><rect x="0" y="0" width="18.5" height="21.5" fill="#e9eff5"/><rect x="0" y="0" width="1.8" height="21.5" fill="#c9d8e6"/><path d="M0.5,21.5 V0.5 H18.5" fill="none" stroke="#cfd9e3" stroke-width="1"/><path d="M18.0,5.4 V21.0 H0.5" fill="none" stroke="#70849a" stroke-width="1"/><g transform="scale(1.005,1.005)"><path d="M3.2,18.6 C5.6,16.6 8.4,12.4 9,8.2 C9.3,6.2 8.1,6.2 8.3,8.2 C8.7,11.8 11.4,14.2 15.2,14.8 C16.4,14.5 15.4,13.5 13.2,13.8 C9.4,14.4 5.6,16.2 3.2,18.6 Z" fill="none" stroke="#e4444a" stroke-width="0.85" stroke-linejoin="round"/><path d="M2.8,19.2 L5,16.6" stroke="#e4444a" stroke-width="1.4"/></g><rect x="-2.9" y="17" width="7.6" height="4.9" rx=".5" fill="#0c0c0c"/><path d="M-1.1,17.2 v-1.4 a2,2 0 0 1 4,0 v1.4" stroke="#0c0c0c" stroke-width="1.8" fill="none"/><rect x="0.2" y="18.3" width="1.4" height="2.2" fill="#fff"/></svg>
<div class="t " style="left:824.3px;top:573.5px;letter-spacing:0.076px;">La resolución de una página con solo una imagen su</div>
<svg style="left:801.5px;top:593.5px" width="18.5" height="21.5" viewBox="0 0 18.5 21.5"><rect x="0" y="0" width="18.5" height="21.5" fill="#e9eff5"/><rect x="0" y="0" width="1.8" height="21.5" fill="#c9d8e6"/><path d="M0.5,21.5 V0.5 H18.5" fill="none" stroke="#cfd9e3" stroke-width="1"/><path d="M18.0,5.4 V21.0 H0.5" fill="none" stroke="#70849a" stroke-width="1"/><g transform="scale(1.005,1.005)"><path d="M3.2,18.6 C5.6,16.6 8.4,12.4 9,8.2 C9.3,6.2 8.1,6.2 8.3,8.2 C8.7,11.8 11.4,14.2 15.2,14.8 C16.4,14.5 15.4,13.5 13.2,13.8 C9.4,14.4 5.6,16.2 3.2,18.6 Z" fill="none" stroke="#e4444a" stroke-width="0.85" stroke-linejoin="round"/><path d="M2.8,19.2 L5,16.6" stroke="#e4444a" stroke-width="1.4"/></g></svg>
<div class="t " style="left:824.3px;top:596.5px;letter-spacing:0.081px;">Los cuadros de página no están anidados correctamente</div>
<svg style="left:801.5px;top:616.5px" width="18.5" height="21.5" viewBox="0 0 18.5 21.5"><rect x="0" y="0" width="18.5" height="21.5" fill="#e9eff5"/><rect x="0" y="0" width="1.8" height="21.5" fill="#c9d8e6"/><path d="M0.5,21.5 V0.5 H18.5" fill="none" stroke="#cfd9e3" stroke-width="1"/><path d="M18.0,5.4 V21.0 H0.5" fill="none" stroke="#70849a" stroke-width="1"/><g transform="scale(1.005,1.005)"><path d="M3.2,18.6 C5.6,16.6 8.4,12.4 9,8.2 C9.3,6.2 8.1,6.2 8.3,8.2 C8.7,11.8 11.4,14.2 15.2,14.8 C16.4,14.5 15.4,13.5 13.2,13.8 C9.4,14.4 5.6,16.2 3.2,18.6 Z" fill="none" stroke="#e4444a" stroke-width="0.85" stroke-linejoin="round"/><path d="M2.8,19.2 L5,16.6" stroke="#e4444a" stroke-width="1.4"/></g></svg>
<div class="t " style="left:824.3px;top:619.5px;letter-spacing:0.070px;">Se ha utilizado un factor de escala para página</div>
<svg style="left:801.5px;top:639.5px" width="18.5" height="21.5" viewBox="0 0 18.5 21.5"><rect x="0" y="0" width="18.5" height="21.5" fill="#e9eff5"/><rect x="0" y="0" width="1.8" height="21.5" fill="#c9d8e6"/><path d="M0.5,21.5 V0.5 H18.5" fill="none" stroke="#cfd9e3" stroke-width="1"/><path d="M18.0,5.4 V21.0 H0.5" fill="none" stroke="#70849a" stroke-width="1"/><g transform="scale(1.005,1.005)"><path d="M3.2,18.6 C5.6,16.6 8.4,12.4 9,8.2 C9.3,6.2 8.1,6.2 8.3,8.2 C8.7,11.8 11.4,14.2 15.2,14.8 C16.4,14.5 15.4,13.5 13.2,13.8 C9.4,14.4 5.6,16.2 3.2,18.6 Z" fill="none" stroke="#e4444a" stroke-width="0.85" stroke-linejoin="round"/><path d="M2.8,19.2 L5,16.6" stroke="#e4444a" stroke-width="1.4"/></g><rect x="-2.9" y="17" width="7.6" height="4.9" rx=".5" fill="#0c0c0c"/><path d="M-1.1,17.2 v-1.4 a2,2 0 0 1 4,0 v1.4" stroke="#0c0c0c" stroke-width="1.8" fill="none"/><rect x="0.2" y="18.3" width="1.4" height="2.2" fill="#fff"/></svg>
<div class="t " style="left:824.3px;top:642.5px;letter-spacing:-0.063px;">Se usa factor de escala</div>
<svg style="left:801.5px;top:662.5px" width="18.5" height="21.5" viewBox="0 0 18.5 21.5"><rect x="0" y="0" width="18.5" height="21.5" fill="#e9eff5"/><rect x="0" y="0" width="1.8" height="21.5" fill="#c9d8e6"/><path d="M0.5,21.5 V0.5 H18.5" fill="none" stroke="#cfd9e3" stroke-width="1"/><path d="M18.0,5.4 V21.0 H0.5" fill="none" stroke="#70849a" stroke-width="1"/><g transform="scale(1.005,1.005)"><path d="M3.2,18.6 C5.6,16.6 8.4,12.4 9,8.2 C9.3,6.2 8.1,6.2 8.3,8.2 C8.7,11.8 11.4,14.2 15.2,14.8 C16.4,14.5 15.4,13.5 13.2,13.8 C9.4,14.4 5.6,16.2 3.2,18.6 Z" fill="none" stroke="#e4444a" stroke-width="0.85" stroke-linejoin="round"/><path d="M2.8,19.2 L5,16.6" stroke="#e4444a" stroke-width="1.4"/></g><rect x="-3.2" y="2.2" width="11.6" height="4.4" fill="#c8222c"/></svg>
<div class="t " style="left:824.3px;top:665.5px;letter-spacing:0.104px;">Acción con valor distinto de navegación de página en</div>
<svg style="left:801.5px;top:685.5px" width="18.5" height="21.5" viewBox="0 0 18.5 21.5"><rect x="0" y="0" width="18.5" height="21.5" fill="#e9eff5"/><rect x="0" y="0" width="1.8" height="21.5" fill="#c9d8e6"/><path d="M0.5,21.5 V0.5 H18.5" fill="none" stroke="#cfd9e3" stroke-width="1"/><path d="M18.0,5.4 V21.0 H0.5" fill="none" stroke="#70849a" stroke-width="1"/><g transform="scale(1.005,1.005)"><path d="M3.2,18.6 C5.6,16.6 8.4,12.4 9,8.2 C9.3,6.2 8.1,6.2 8.3,8.2 C8.7,11.8 11.4,14.2 15.2,14.8 C16.4,14.5 15.4,13.5 13.2,13.8 C9.4,14.4 5.6,16.2 3.2,18.6 Z" fill="none" stroke="#e4444a" stroke-width="0.85" stroke-linejoin="round"/><path d="M2.8,19.2 L5,16.6" stroke="#e4444a" stroke-width="1.4"/></g><rect x="-3.2" y="2.2" width="11.6" height="4.4" fill="#c8222c"/></svg>
<div class="t " style="left:824.3px;top:688.5px;">Acción de habilitar el envío de webs</div>
</div></div>
</div>
</div>
<div class="btn3" style="left:794px;top:715px;width:26px;height:26px"></div>
<svg style="left:794px;top:715px" width="26" height="26" viewBox="0 0 26 26"><path d="M4.6,13 L12.6,4.8 V8.4 H22 V17.6 H12.6 V21.2 Z" fill="#9ad6f6"/></svg>
<div class="btn3" style="left:840px;top:715px;width:26px;height:26px"></div>
<svg style="left:840px;top:715px" width="26" height="26" viewBox="0 0 26 26"><rect x="7.5" y="7.5" width="12.5" height="12.5" fill="#9ad6f6"/><path d="M5.2,10.8 H16.6 M10.9,5.2 V16.6" stroke="#0b4fc9" stroke-width="2.3"/></svg>
<div class="btn3" style="left:886px;top:715px;width:26px;height:26px"></div>
<svg style="left:886px;top:715px" width="26" height="26" viewBox="0 0 26 26"><rect x="11.2" y="11.2" width="11" height="11" fill="#a6dbf7"/><rect x="5" y="5" width="11" height="11" fill="#9ad6f6" stroke="#dff1fb" stroke-width=".8"/></svg>
<div class="btn3" style="left:932px;top:715px;width:26px;height:26px"></div>
<svg style="left:932px;top:715px" width="26" height="26" viewBox="0 0 26 26"><rect x="5.2" y="10" width="12.5" height="12.5" fill="#9ad6f6"/><path d="M8.2,19.6 L9.6,14.6 L18.4,5.4 a1.9,1.9 0 0 1 2.9,0 l.3,.3 a1.9,1.9 0 0 1 0,2.7 L12.8,18 Z" fill="#1450c8"/><path d="M17,6.8 L20.2,10" stroke="#9ad6f6" stroke-width=".9"/></svg>
<div class="btn3" style="left:978px;top:715px;width:26px;height:26px"></div>
<svg style="left:978px;top:715px" width="26" height="26" viewBox="0 0 26 26"><rect x="7" y="7" width="12.6" height="12.6" fill="#d4d4d4"/><path d="M5.8,5.8 L20.8,20.8 M20.8,5.8 L5.8,20.8" stroke="#858585" stroke-width="2.4" stroke-linecap="round"/></svg>
<div class="a" style="left:28px;top:786px;width:913px;height:35px;background:#e6e6e6;border:1px solid #bcbcbc"></div>
<div class="a" style="left:952px;top:787px;width:98px;height:33px;background:#fdfdfd;border:1.5px solid #0a66bd;border-radius:4.5px"></div>
<div class="a" style="left:1062px;top:787px;width:98px;height:33px;background:#fefefe;border:1px solid #d2d2d2;border-bottom-color:#bdbdbd;border-radius:4.5px"></div>
<div class="t " style="left:978.4px;top:797.0px;letter-spacing:-0.057px;">Aceptar</div>
<div class="t " style="left:1086.7px;top:797.0px;letter-spacing:-0.403px;">Cancelar</div>
<svg style="left:1162px;top:823px" width="11" height="11" viewBox="0 0 11 11"><rect x="8" y="0" width="3" height="3" fill="#c3c3c3"/><rect x="4" y="4" width="3" height="3" fill="#c3c3c3"/><rect x="8" y="4" width="3" height="3" fill="#c3c3c3"/><rect x="0" y="8" width="3" height="3" fill="#c3c3c3"/><rect x="4" y="8" width="3" height="3" fill="#c3c3c3"/><rect x="8" y="8" width="3" height="3" fill="#c3c3c3"/></svg>
<svg style="left:0;top:0" width="1225" height="890" viewBox="0 0 1225 890"><path d="M1060.4,166.4 L1155.2,166.4" stroke="#f2a246" stroke-width="2.4" fill="none"/></svg>
<svg style="left:0;top:0" width="1225" height="890" viewBox="0 0 1225 890"><path d="M747.5,227.7 L747.5,446.4" stroke="#f2a246" stroke-width="2.4" fill="none"/></svg>
<svg style="left:0;top:0" width="1225" height="890" viewBox="0 0 1225 890"><path d="M515.4,663.4 L617.2,663.4" stroke="#f2a246" stroke-width="2.4" fill="none"/></svg>
<svg style="left:0;top:0" width="1225" height="890" viewBox="0 0 1225 890"><path d="M594.3,695 L682.4,695" stroke="#f2a246" stroke-width="2.4" fill="none"/></svg>
<svg style="left:0;top:0" width="1225" height="890" viewBox="0 0 1225 890"><path d="M421.1,741 L421.1,844" stroke="#f2a246" stroke-width="2.4" fill="none"/></svg>
<svg style="left:0;top:0" width="1225" height="890" viewBox="0 0 1225 890"><path d="M466.4,741 L466.4,842" stroke="#f2a246" stroke-width="2.4" fill="none"/></svg>
<svg style="left:0;top:0" width="1225" height="890" viewBox="0 0 1225 890"><path d="M513,741 L513,845.4" stroke="#f2a246" stroke-width="2.4" fill="none"/></svg>
<svg style="left:0;top:0" width="1225" height="890" viewBox="0 0 1225 890"><path d="M560,741 L560,843" stroke="#f2a246" stroke-width="2.4" fill="none"/></svg>
<svg style="left:0;top:0" width="1225" height="890" viewBox="0 0 1225 890"><path d="M806.2,741 L806.2,838" stroke="#f2a246" stroke-width="2.4" fill="none"/></svg>
<svg style="left:0;top:0" width="1225" height="890" viewBox="0 0 1225 890"><path d="M854.5,741 L854.5,838" stroke="#f2a246" stroke-width="2.4" fill="none"/></svg>
<svg style="left:0;top:0" width="1225" height="890" viewBox="0 0 1225 890"><path d="M899.1,743 L901.7,836" stroke="#f2a246" stroke-width="2.4" fill="none"/></svg>
<svg style="left:0;top:0" width="1225" height="890" viewBox="0 0 1225 890"><path d="M946.4,741 L947.8,842.7" stroke="#f2a246" stroke-width="2.4" fill="none"/></svg>
<svg style="left:0;top:0" width="1225" height="890" viewBox="0 0 1225 890"><path d="M992.5,741 L994.3,842.7" stroke="#f2a246" stroke-width="2.4" fill="none"/></svg>
<div class="L" style="left:1158.9px;top:144.0px">A</div>
<div class="L" style="left:741.2px;top:450.7px">B</div>
<div class="L" style="left:630px;top:643.3px">C</div>
<div class="L" style="left:687px;top:674.5px">D</div>
<div class="L" style="left:409px;top:849.4px">E</div>
<div class="L" style="left:455px;top:846.9px">F</div>
<div class="L" style="left:497.5px;top:849.4px">G</div>
<div class="L" style="left:548px;top:850.3px">H</div>
<div class="L" style="left:801px;top:840.3px">I</div>
<div class="L" style="left:844.5px;top:836.1px">J</div>
<div class="L" style="left:891px;top:840.1px">K</div>
<div class="L" style="left:939.5px;top:838.5px">L</div>
<div class="L" style="left:983.4px;top:840.1px">M</div>
</body>
</html>
